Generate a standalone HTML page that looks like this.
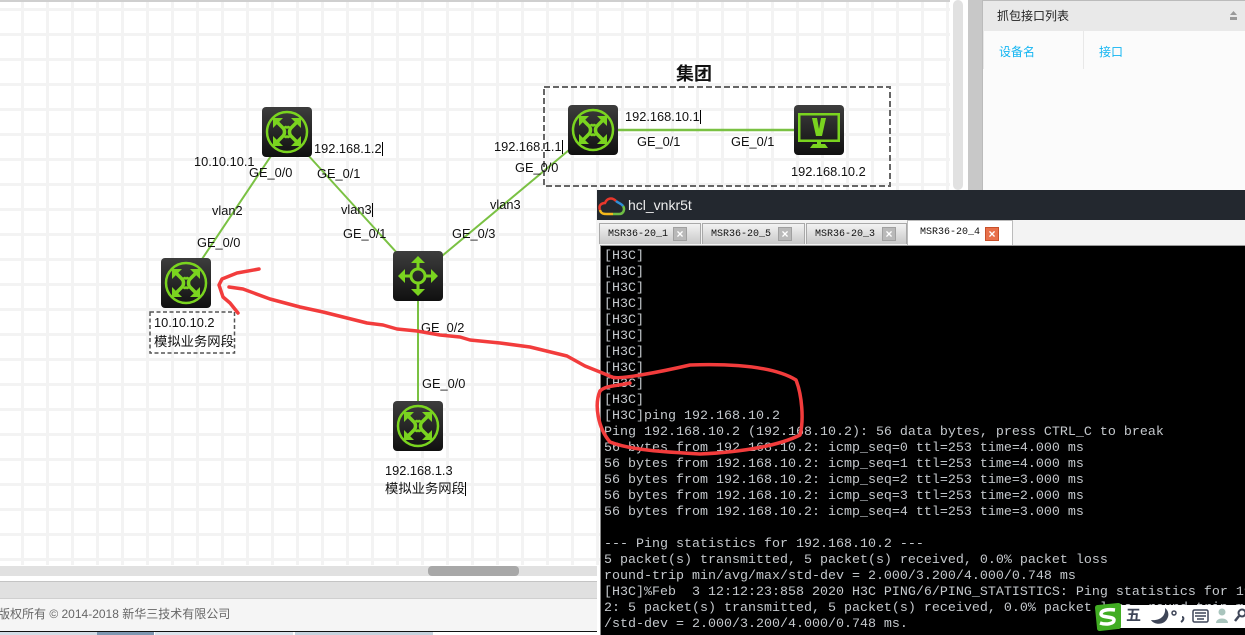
<!DOCTYPE html>
<html>
<head>
<meta charset="utf-8">
<style>
html,body{margin:0;padding:0;width:1245px;height:635px;overflow:hidden;background:#fff}
body{position:relative;font-family:"Liberation Sans","Noto Sans CJK SC",sans-serif;color:#111}
.a{position:absolute}
.t{position:absolute;font-size:12px;line-height:14px;white-space:nowrap;color:#111}
.n{font-size:12.8px}
.c{font-size:13.33px}
.caret{border-right:1px solid #000}
#grid{left:0;top:0;width:950px;height:565px;background-color:#fff;
background-image:linear-gradient(to right,#f3f3f3 3px,transparent 3px),linear-gradient(to bottom,#f3f3f3 3px,transparent 3px);
background-size:25px 25px;background-position:21px 8px}
.tab{position:absolute;top:223px;height:21px;background:linear-gradient(#f2f2f2,#c9c9c9);border:1px solid #a9a9a9;border-bottom:0;box-sizing:border-box;font:10px/21px "Liberation Mono",monospace;color:#111;padding-left:8px}
.x{position:absolute;top:3px;width:14px;height:14px;background:#b9b9b9;border:1px solid #a0a0a0;box-sizing:border-box;color:#fff;font:bold 12px/12px "Liberation Sans",sans-serif;text-align:center}
#term{left:600px;top:245px;width:645px;height:390px;background:#000;overflow:hidden;border-left:1px solid #888;border-top:1px solid #999;box-sizing:border-box}
#term pre{margin:0;position:absolute;left:3px;top:3px;font:13.33px/16px "Liberation Mono",monospace;color:#c4c8cc;white-space:pre}
</style>
</head>
<body>
<div class="a" id="grid"></div>
<div class="a" style="left:0;top:0;width:950px;height:2px;background:#cfcfcf"></div>

<!-- scroll bars -->
<div class="a" style="left:953px;top:0;width:10px;height:190px;background:#e1e1e1;border-radius:5px"></div>
<div class="a" style="left:968px;top:0;width:14px;height:190px;background:#c8c8c8"></div>
<div class="a" style="left:0;top:566px;width:597px;height:10px;background:#e1e1e1"></div>
<div class="a" style="left:428px;top:566px;width:91px;height:10px;background:#a8a8a8;border-radius:4px"></div>
<div class="a" style="left:0;top:576px;width:597px;height:5px;background:#fff"></div>
<div class="a" style="left:0;top:581px;width:597px;height:1px;background:#c4c4c4"></div>
<div class="a" style="left:0;top:582px;width:597px;height:16px;background:#e0e0e0"></div>
<div class="a" style="left:0;top:598px;width:597px;height:33px;background:#f5f5f5;border-top:1px solid #cfcfcf;box-sizing:border-box"></div>
<div class="t" style="left:-2px;top:607px;color:#666">版权所有 © 2014-2018 新华三技术有限公司</div>
<div class="a" style="left:0;top:631px;width:597px;height:1px;background:#111"></div>
<div class="a" style="left:0;top:632px;width:97px;height:3px;background:#d3dde6"></div>
<div class="a" style="left:97px;top:632px;width:57px;height:3px;background:#7f98b2"></div>
<div class="a" style="left:155px;top:632px;width:138px;height:3px;background:#dbe4ec"></div>
<div class="a" style="left:295px;top:632px;width:138px;height:3px;background:#c6d3de"></div>

<!-- right panel -->
<div class="a" style="left:982px;top:0;width:263px;height:190px;background:#fbfbfb;border-left:1px solid #bbb;box-sizing:border-box"></div>
<div class="a" style="left:983px;top:0;width:262px;height:1px;background:#bbb"></div>
<div class="a" style="left:983px;top:1px;width:262px;height:30px;background:#e9e9e9"></div>
<div class="t" style="left:997px;top:9px;color:#222">抓包接口列表</div>
<svg class="a" style="left:1229px;top:11px" width="9" height="11"><path d="M4.500 0L8 4H1Z M1 6H8V9H1Z" fill="#999"/></svg>
<div class="t" style="left:999px;top:45px;color:#12b5f2">设备名</div>
<div class="t" style="left:1099px;top:45px;color:#12b5f2">接口</div>
<div class="a" style="left:1083px;top:31px;width:1px;height:38px;background:#e8e8e8"></div>
<div class="a" style="left:983px;top:31px;width:1px;height:38px;background:#e8e8e8"></div>

<!-- topology -->
<svg class="a" style="left:0;top:0" width="950" height="565">
<defs>
<linearGradient id="g" x1="0" y1="0" x2="0" y2="1"><stop offset="0" stop-color="#3d3d3d"/><stop offset="1" stop-color="#101010"/></linearGradient>
<g id="router">
<rect width="50" height="50" rx="4" fill="url(#g)"/>
<circle cx="25" cy="25" r="20" fill="none" stroke="#7ad41f" stroke-width="2.500"/>
<g fill="none" stroke="#7ad41f" stroke-width="3.500">
<path d="M15 15L21 21C23 23 23 27 21 29L15 35"/>
<path d="M35 15L29 21C27 23 27 27 29 29L35 35"/>
<path d="M23 19C24 21 26 21 27 19" stroke-width="2.500"/>
<path d="M23 31C24 29 26 29 27 31" stroke-width="2.500"/>
</g>
<g fill="#7ad41f">
<path d="M11 11H21L11 21Z M39 11H29L39 21Z M11 39H21L11 29Z M39 39H29L39 29Z"/>
</g>
</g>
<g id="sw">
<rect width="50" height="50" rx="4" fill="url(#g)"/>
<circle cx="25" cy="25" r="7" fill="none" stroke="#7ad41f" stroke-width="3"/>
<g stroke="#7ad41f" stroke-width="3" fill="none">
<path d="M25 17V9M25 33V41M17 25H9M33 25H41"/>
</g>
<g fill="#7ad41f">
<path d="M25 5L32 12H18Z M25 45L32 38H18Z M5 25L12 18V32Z M45 25L38 18V32Z"/>
</g>
</g>
<g id="mon">
<rect width="50" height="50" rx="4" fill="url(#g)"/>
<rect x="5.250" y="9.250" width="39.500" height="26.500" fill="none" stroke="#7ad41f" stroke-width="2.500"/>
<path d="M18 13H23L25 24L27 13H32L28 31H22Z" fill="#7ad41f"/>
<path d="M23 36H27V39H23Z M19 39H31L34 43H16Z" fill="#7ad41f"/>
</g>
</defs>
<g stroke="#7ac143" stroke-width="2" fill="none">
<path d="M287 132L186 283"/>
<path d="M287 132L418 276"/>
<path d="M418 276L593 130"/>
<path d="M593 130H819" stroke-width="2.500"/>
<path d="M418 276V426"/>
</g>
<rect x="544" y="87" width="346" height="99" fill="none" stroke="#666" stroke-width="2" stroke-dasharray="6 3"/>
<rect x="150" y="312" width="84.500" height="41" fill="none" stroke="#555" stroke-width="1.500" stroke-dasharray="4 2.500"/>
<use href="#router" x="262" y="107"/>
<use href="#router" x="161" y="258"/>
<use href="#sw" x="393" y="251"/>
<use href="#router" x="568" y="105"/>
<use href="#mon" x="794" y="105"/>
<use href="#router" x="393" y="401"/>
</svg>

<div class="t n" style="left:194px;top:155px">10.10.10.1</div>
<div class="t n" style="left:249px;top:166px">GE_0/0</div>
<div class="t n caret" style="left:314px;top:142px">192.168.1.2</div>
<div class="t n" style="left:317px;top:167px">GE_0/1</div>
<div class="t n" style="left:212px;top:204px">vlan2</div>
<div class="t n caret" style="left:341px;top:203px">vlan3</div>
<div class="t n" style="left:197px;top:236px">GE_0/0</div>
<div class="t n" style="left:343px;top:227px">GE_0/1</div>
<div class="t n" style="left:452px;top:227px">GE_0/3</div>
<div class="t n" style="left:490px;top:198px">vlan3</div>
<div class="t n caret" style="left:494px;top:140px">192.168.1.1</div>
<div class="t n" style="left:515px;top:161px">GE_0/0</div>
<div class="t n caret" style="left:625px;top:110px">192.168.10.1</div>
<div class="t n" style="left:637px;top:135px">GE_0/1</div>
<div class="t n" style="left:731px;top:135px">GE_0/1</div>
<div class="t n" style="left:791px;top:165px">192.168.10.2</div>
<div class="t n" style="left:421px;top:321px">GE_0/2</div>
<div class="t n" style="left:422px;top:377px">GE_0/0</div>
<div class="t n" style="left:154px;top:316px">10.10.10.2</div>
<div class="t c" style="left:154px;top:335px">模拟业务网段</div>
<div class="t n" style="left:385px;top:464px">192.168.1.3</div>
<div class="t c caret" style="left:385px;top:482px">模拟业务网段</div>
<div class="t" style="left:676px;top:63px;font-size:18px;line-height:22px;font-weight:bold">集团</div>

<!-- terminal window -->
<div class="a" style="left:597px;top:190px;width:648px;height:30px;background:#23282f"></div>
<svg class="a" style="left:597px;top:195px" width="30" height="22" viewBox="0 0 30 22" fill="none" stroke-width="2.500">
<path d="M3 15C1 10 5 8 8 8C10 3 15 2 19 6" stroke="#e8372c"/>
<path d="M3 15C4 19 7 19 10 19H16" stroke="#f4b81c"/>
<path d="M16 19H22C27 19 28 14 26 11" stroke="#6fbe44"/>
<path d="M19 6C21 8 24 8 26 11" stroke="#2f8fd8"/>
</svg>
<div class="a" style="left:628px;top:197px;font-size:14px;line-height:16px;color:#eee">hcl_vnkr5t</div>
<div class="a" style="left:597px;top:220px;width:648px;height:25px;background:#f3f3f3"></div>
<div class="tab" style="left:599px;width:102px">MSR36-20_1<span class="x" style="left:73px">×</span></div>
<div class="tab" style="left:702px;width:103px">MSR36-20_5<span class="x" style="left:75px">×</span></div>
<div class="tab" style="left:806px;width:101px">MSR36-20_3<span class="x" style="left:75px">×</span></div>
<div class="tab" style="left:907px;top:220px;height:25px;width:106px;background:#fff;line-height:24px;padding-left:12px;border-color:#bbb">MSR36-20_4<span class="x" style="left:77px;top:6px;background:#e8704a;border-color:#c8502a">×</span></div>
<div class="a" id="term"><pre>[H3C]
[H3C]
[H3C]
[H3C]
[H3C]
[H3C]
[H3C]
[H3C]
[H3C]
[H3C]
[H3C]ping 192.168.10.2
Ping 192.168.10.2 (192.168.10.2): 56 data bytes, press CTRL_C to break
56 bytes from 192.168.10.2: icmp_seq=0 ttl=253 time=4.000 ms
56 bytes from 192.168.10.2: icmp_seq=1 ttl=253 time=4.000 ms
56 bytes from 192.168.10.2: icmp_seq=2 ttl=253 time=3.000 ms
56 bytes from 192.168.10.2: icmp_seq=3 ttl=253 time=2.000 ms
56 bytes from 192.168.10.2: icmp_seq=4 ttl=253 time=3.000 ms

--- Ping statistics for 192.168.10.2 ---
5 packet(s) transmitted, 5 packet(s) received, 0.0% packet loss
round-trip min/avg/max/std-dev = 2.000/3.200/4.000/0.748 ms
[H3C]%Feb  3 12:12:23:858 2020 H3C PING/6/PING_STATISTICS: Ping statistics for 192.168.10.
2: 5 packet(s) transmitted, 5 packet(s) received, 0.0% packet loss, round-trip min/avg/max
/std-dev = 2.000/3.200/4.000/0.748 ms.</pre></div>

<!-- red annotation -->
<svg class="a" style="left:0;top:0" width="1245" height="635" fill="none" stroke="#f23c3c" stroke-width="3.500" stroke-linecap="round" stroke-linejoin="round">
<path d="M259 269L237 273L222 279L219 285L223 297L230 303L238 313"/>
<path d="M229 287L243 289L270 299L300 307L323 312L347 318L367 323L383 325L397 329L417 331L440 335L460 337L470 340L500 343L530 347L567 356L585 366L600 372L612 377"/>
<path d="M612 377C618 380 660 372 690 365C720 364 770 364 796 380C802 395 804 420 800 435C780 445 745 452 700 454C665 452 630 450 610 442C598 428 594 405 600 391C606 385 618 386 630 383"/>
</svg>

<!-- IME bar -->
<div class="a" style="left:1112px;top:605px;width:133px;height:23px;background:#fff"></div>
<svg class="a" style="left:1094px;top:602px" width="28" height="29" viewBox="0 0 28 29">
<path d="M4 3L24 1C26 1 27 2 27 4L27 24C27 26 26 27 24 27L6 29C4 29 3 28 3 26L1 6C1 4 2 3 4 3Z" fill="#41ad23"/>
<path d="M21 8C14 7 7 8 7 12C7 16 20 14 20 18C20 22 12 23 6 21" fill="none" stroke="#fff" stroke-width="3.500"/>
</svg>
<div class="a" style="left:1126px;top:607px;font-size:15px;line-height:18px;font-weight:bold;color:#3f4658">五</div>
<svg class="a" style="left:1148px;top:606px" width="97" height="22" viewBox="0 0 97 22">
<path d="M17 2C18 10 12 15 3 14C6 19 17 20 20 11C21 8 20 4 17 2Z" fill="#3f4658"/>
<circle cx="26" cy="7" r="2" fill="none" stroke="#3f4658" stroke-width="1.500"/>
<path d="M34 11C36 11 36 14 33 16" stroke="#3f4658" stroke-width="2" fill="none"/>
<rect x="45" y="4" width="15" height="12" rx="1.500" fill="none" stroke="#3f4658" stroke-width="1.500"/>
<path d="M47 7H58M47 10H58M49 13H56" stroke="#3f4658" stroke-width="1.500"/>
<circle cx="74" cy="6" r="3.500" fill="#a9c4bd"/>
<path d="M68 17C68 11 80 11 80 17Z" fill="#a9c4bd"/>
<circle cx="94" cy="7" r="3.500" fill="none" stroke="#3f4658" stroke-width="2"/>
<path d="M91 10L87 15" stroke="#3f4658" stroke-width="2.500"/>
</svg>
</body>
</html>
